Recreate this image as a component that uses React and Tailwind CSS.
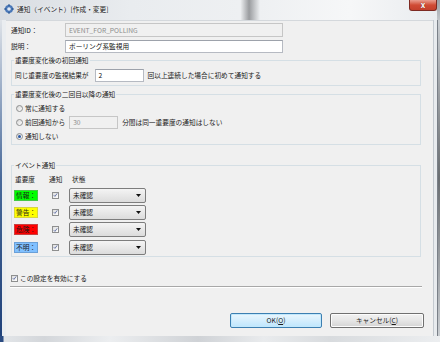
import React from 'react';

const Check = () => (
  <span className="w-[7px] h-[7px] shrink-0 border border-[#8e8f8f] bg-linear-to-br from-[#dedede] to-white flex items-center justify-center">
    <svg viewBox="0 0 8 8" className="w-[6px] h-[6px]">
      <path d="M1.3 4.3 L3.1 6.2 L6.7 1.4" fill="none" stroke="#4b5c9a" strokeWidth="1.3" />
    </svg>
  </span>
);

const Radio = ({ checked }) => (
  <span className="w-[7px] h-[7px] shrink-0 rounded-full border border-[#8e8f8f] bg-linear-to-br from-[#d6d6d6] to-white flex items-center justify-center">
    {checked && <span className="w-[3px] h-[3px] rounded-full bg-[#2b59a6]" />}
  </span>
);

const Select = () => (
  <div className="w-[77px] h-[15px] rounded-[2px] border border-[#7d7d7d] bg-linear-to-b from-[#f4f4f4] to-[#dcdcdc] flex items-center justify-between pl-[3px] pr-[4px]">
    <span>未確認</span>
    <svg viewBox="0 0 5 3" className="w-[5px] h-[3px]">
      <path d="M0 0h5L2.5 3z" fill="#111" />
    </svg>
  </div>
);

const Field = ({ value, disabled, className }) => (
  <div
    className={
      'flex items-center pl-[3px] border ' +
      (disabled
        ? 'border-[#c6c6c6] bg-[#f0f0f0] text-[#8d8d8d] '
        : 'border-[#b6bac2] border-t-[#9da2ab] bg-white text-[#111] ') +
      className
    }
  >
    {value}
  </div>
);

const levels = [
  { name: '情報：', cls: 'bg-[#00ff00] border-[#46c846]' },
  { name: '警告：', cls: 'bg-[#ffff00] border-[#d6d640]' },
  { name: '危険：', cls: 'bg-[#ff0000] border-[#c84040]' },
  { name: '不明：', cls: 'bg-[#80c0ff] border-[#6aa0d8]' },
];

export default function App() {
  return (
    <div className="w-[440px] h-[342px] overflow-hidden flex flex-col bg-[#e6e9ed] text-[6.7px] leading-none text-[#1a1a1a] font-['Noto_Sans_CJK_JP','Noto_Sans',sans-serif]">
      {/* Title bar */}
      <div className="h-[20px] shrink-0 flex">
        <div className="w-[437px] flex items-start bg-[linear-gradient(90deg,#d9dde2_0%,#e9ecef_30%,#eef0f2_55%,#9a9c9f_57%,#eef0f2_59.5%,#f6f7f8_80%,#e9ecef_100%)]">
          <svg viewBox="0 0 10 10" className="w-[10px] h-[10px] mt-[4px] ml-[4px]">
            <circle cx="5" cy="5" r="4" fill="#4a78b8" />
            <circle cx="5" cy="5" r="1.8" fill="#dfe8f4" />
            <path d="M5 0.3v2M5 7.7v2M0.3 5h2M7.7 5h2" stroke="#2e5a96" strokeWidth="1.4" />
          </svg>
          <span className="mt-[5.5px] ml-[3px] text-[#1a1a1a] [text-shadow:0_0_3px_#fff]">通知（イベント）[作成・変更]</span>
          <div className="ml-auto w-[28px] h-[11px] rounded-b-[3px] border border-t-0 border-[#7d2a22] bg-linear-to-b from-[#e99d8f] via-[#d04b35] to-[#c4402c] flex items-center justify-center">
            <span className="text-white text-[8px] font-bold [text-shadow:0_0_1px_#5a1a10]">x</span>
          </div>
        </div>
        <div className="flex-1 bg-linear-to-b from-[#9aa0a6] to-[#c2c6ca]" />
      </div>

      <div className="flex h-[316px] shrink-0">
        {/* left frame */}
        <div className="w-[6px] flex">
          <div className="w-[2px] bg-linear-to-b from-[#dfe3e8] via-[#4a6a9a] to-[#20427a]" />
          <div className="flex-1 bg-[#eaedf0]" />
        </div>

        {/* Content panel */}
        <div className="w-[427px] bg-[#f0f0f0] flex flex-col border-t border-[#d4d8dc]">
          <div className="mt-[2px] h-[14px] flex items-center">
            <span className="ml-[5px] w-[54px]">通知ID：</span>
            <Field value="EVENT_FOR_POLLING" disabled className="w-[218px] h-[14px]" />
          </div>
          <div className="mt-[3px] h-[13px] flex items-center">
            <span className="ml-[5px] w-[54px]">説明：</span>
            <Field value="ポーリング系監視用" className="w-[218px] h-[13px]" />
          </div>

          <fieldset className="mt-[4px] ml-[5px] w-[410px] border border-[#d5dfe5] pb-[3px]">
            <legend className="ml-[2px] px-[1px] h-[7px] leading-[7px]">重要度変化後の初回通知</legend>
            <div className="mt-[5px] h-[13px] flex items-center pl-[3px]">
              <span>同じ重要度の監視結果が</span>
              <Field value="2" className="ml-[6px] w-[49px] h-[13px]" />
              <span className="ml-[4px]">回以上連続した場合に初めて通知する</span>
            </div>
          </fieldset>

          <fieldset className="mt-[5px] ml-[5px] w-[410px] border border-[#d5dfe5] pt-[3px] pb-[1px]">
            <legend className="ml-[2px] px-[1px] h-[7px] leading-[7px]">重要度変化後の二回目以降の通知</legend>
            <div className="h-[14px] flex items-center pl-[4px] gap-[2px]">
              <Radio />
              <span>常に通知する</span>
            </div>
            <div className="h-[14px] flex items-center pl-[4px] gap-[2px]">
              <Radio />
              <span>前回通知から</span>
              <Field value="30" disabled className="ml-[2px] w-[49px] h-[13px]" />
              <span className="ml-[2px]">分間は同一重要度の通知はしない</span>
            </div>
            <div className="h-[14px] flex items-center pl-[4px] gap-[2px]">
              <Radio checked />
              <span>通知しない</span>
            </div>
          </fieldset>

          <fieldset className="mt-[17px] ml-[5px] w-[410px] border border-[#d5dfe5] pb-[0.5px]">
            <legend className="ml-[2px] px-[1px] h-[7px] leading-[7px]">イベント通知</legend>
            <div className="mt-[7px] h-[7px] grid grid-cols-[34px_22px_77px] pl-[3px]">
              <span>重要度</span>
              <span>通知</span>
              <span className="pl-[1px]">状態</span>
            </div>
            <div className="mt-[3.5px] flex flex-col">
              {levels.map((l) => (
                <div key={l.name} className="h-[17.3px] grid grid-cols-[32px_23px_77px] items-center pl-[2px]">
                  <span className={'w-[24px] h-[11px] border flex items-center pl-[1px] ' + l.cls}>{l.name}</span>
                  <span className="pl-[6px]">
                    <Check />
                  </span>
                  <Select />
                </div>
              ))}
            </div>
          </fieldset>

          <div className="mt-[16px] h-[10px] flex items-center pl-[5px] gap-[2px]">
            <Check />
            <span>この設定を有効にする</span>
          </div>
          <div className="mt-[3px] ml-[4px] w-[412px] border-t border-[#a8a8a8] border-b border-b-white" />

          <div className="mt-[25px] flex pl-[224px] gap-[8px]">
            <button className="w-[92px] h-[15px] rounded-[2px] border border-[#3c7fb1] bg-linear-to-b from-[#eaf6fd] to-[#bee6fd] shadow-[inset_0_0_0_1px_#c2e8fc] flex items-center justify-center">
              OK(<span className="underline">O</span>)
            </button>
            <button className="w-[94px] h-[15px] rounded-[2px] border border-[#707070] bg-linear-to-b from-[#f2f2f2] via-[#e6e6e6] to-[#d4d4d4] shadow-[inset_0_0_0_1px_#fcfcfc] flex items-center justify-center">
              キャンセル(<span className="underline">C</span>)
            </button>
          </div>
        </div>

        {/* right frame */}
        <div className="flex-1 flex">
          <div className="w-[4px] bg-[#e8ebee] border-l border-[#c4cad0]" />
          <div className="w-[1px] bg-[#7a8088]" />
          <div className="flex-1 bg-linear-to-b from-[#c9cdd1] via-[#6a6e72] to-[#c9cdd1]" />
        </div>
      </div>

      {/* bottom frame */}
      <div className="flex-1 flex bg-[linear-gradient(90deg,#2b4c82_0%,#2b4c82_0.6%,#e2e5e8_1%,#d3d6da_10%,#eceef0_25%,#cfd2d6_45%,#e9ebed_60%,#d8dbde_75%,#eceef0_100%)]" />
    </div>
  );
}
